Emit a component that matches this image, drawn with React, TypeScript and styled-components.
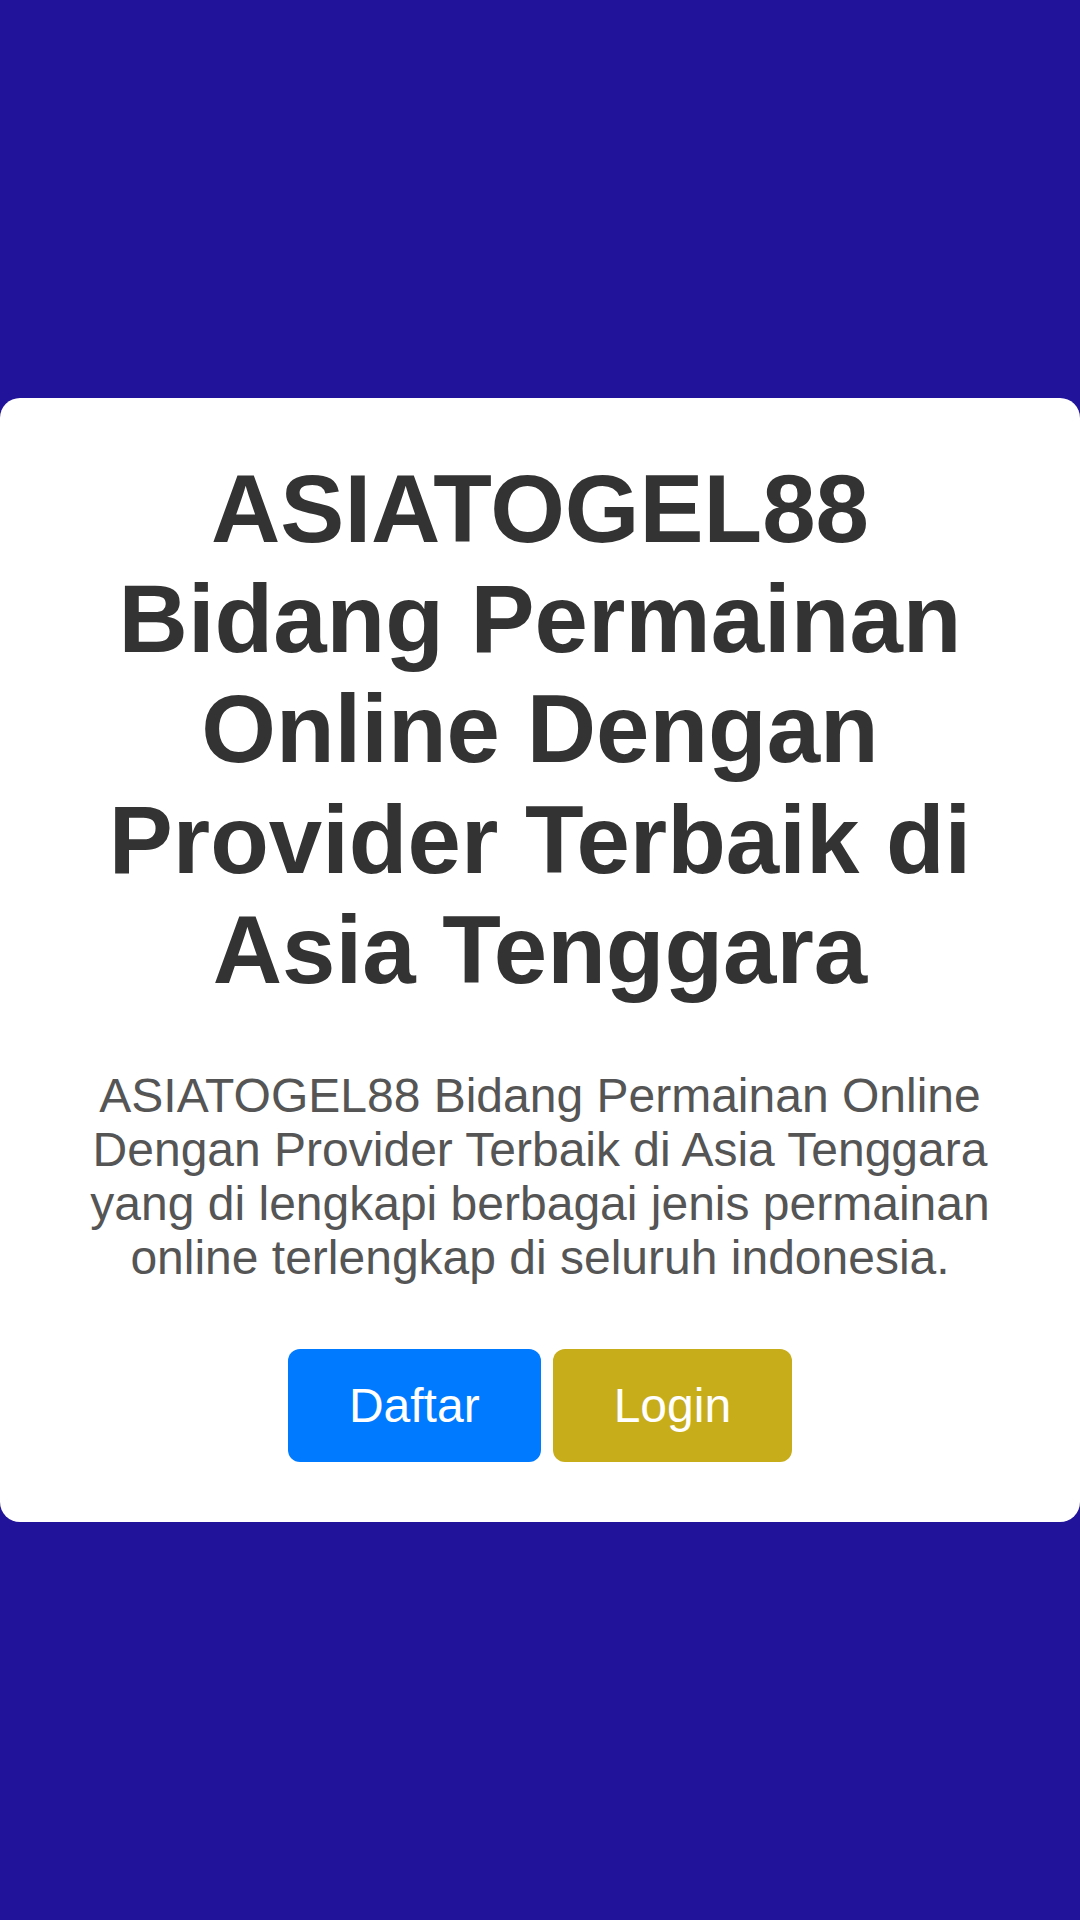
import React from "react";
import styled, { createGlobalStyle } from "styled-components";

const GlobalStyle = createGlobalStyle`
  html, body {
    margin: 0;
    padding: 0;
    background: #21139a;
  }
  body {
    font-family: "Liberation Sans", Arial, sans-serif;
  }
`;

const Page = styled.div`
  min-height: 1920px;
  display: flex;
  align-items: center;
  justify-content: center;
  background: #21139a;
`;

const Card = styled.section`
  width: 100%;
  box-sizing: border-box;
  background: #ffffff;
  border-radius: 20px;
  padding: 56px 40px 60px;
  display: flex;
  flex-direction: column;
  align-items: center;
  text-align: center;
`;

const Title = styled.h1`
  margin: 0 0 64px;
  font-size: 96px;
  line-height: 1.15;
  font-weight: 700;
  color: #333333;
`;

const Lead = styled.p`
  margin: 0 0 64px;
  font-size: 48px;
  line-height: 54px;
  color: #555555;
`;

const Actions = styled.div`
  display: flex;
  gap: 12px;
  justify-content: center;
`;

const ActionButton = styled.a<{ $tone: "blue" | "gold" }>`
  display: inline-block;
  font-size: 48px;
  line-height: 55px;
  padding: 29px 61px;
  border-radius: 12px;
  color: #ffffff;
  text-decoration: none;
  background: ${(p) => (p.$tone === "blue" ? "#007bff" : "#c8ad1a")};
`;

export default function App() {
  return (
    <>
      <GlobalStyle />
      <Page>
        <Card>
          <Title>
            ASIATOGEL88 Bidang Permainan Online Dengan Provider Terbaik di Asia
            Tenggara
          </Title>
          <Lead>
            ASIATOGEL88 Bidang Permainan Online Dengan Provider Terbaik di Asia
            Tenggara yang di lengkapi berbagai jenis permainan online
            terlengkap di seluruh indonesia.
          </Lead>
          <Actions>
            <ActionButton $tone="blue" href="#">
              Daftar
            </ActionButton>
            <ActionButton $tone="gold" href="#">
              Login
            </ActionButton>
          </Actions>
        </Card>
      </Page>
    </>
  );
}
